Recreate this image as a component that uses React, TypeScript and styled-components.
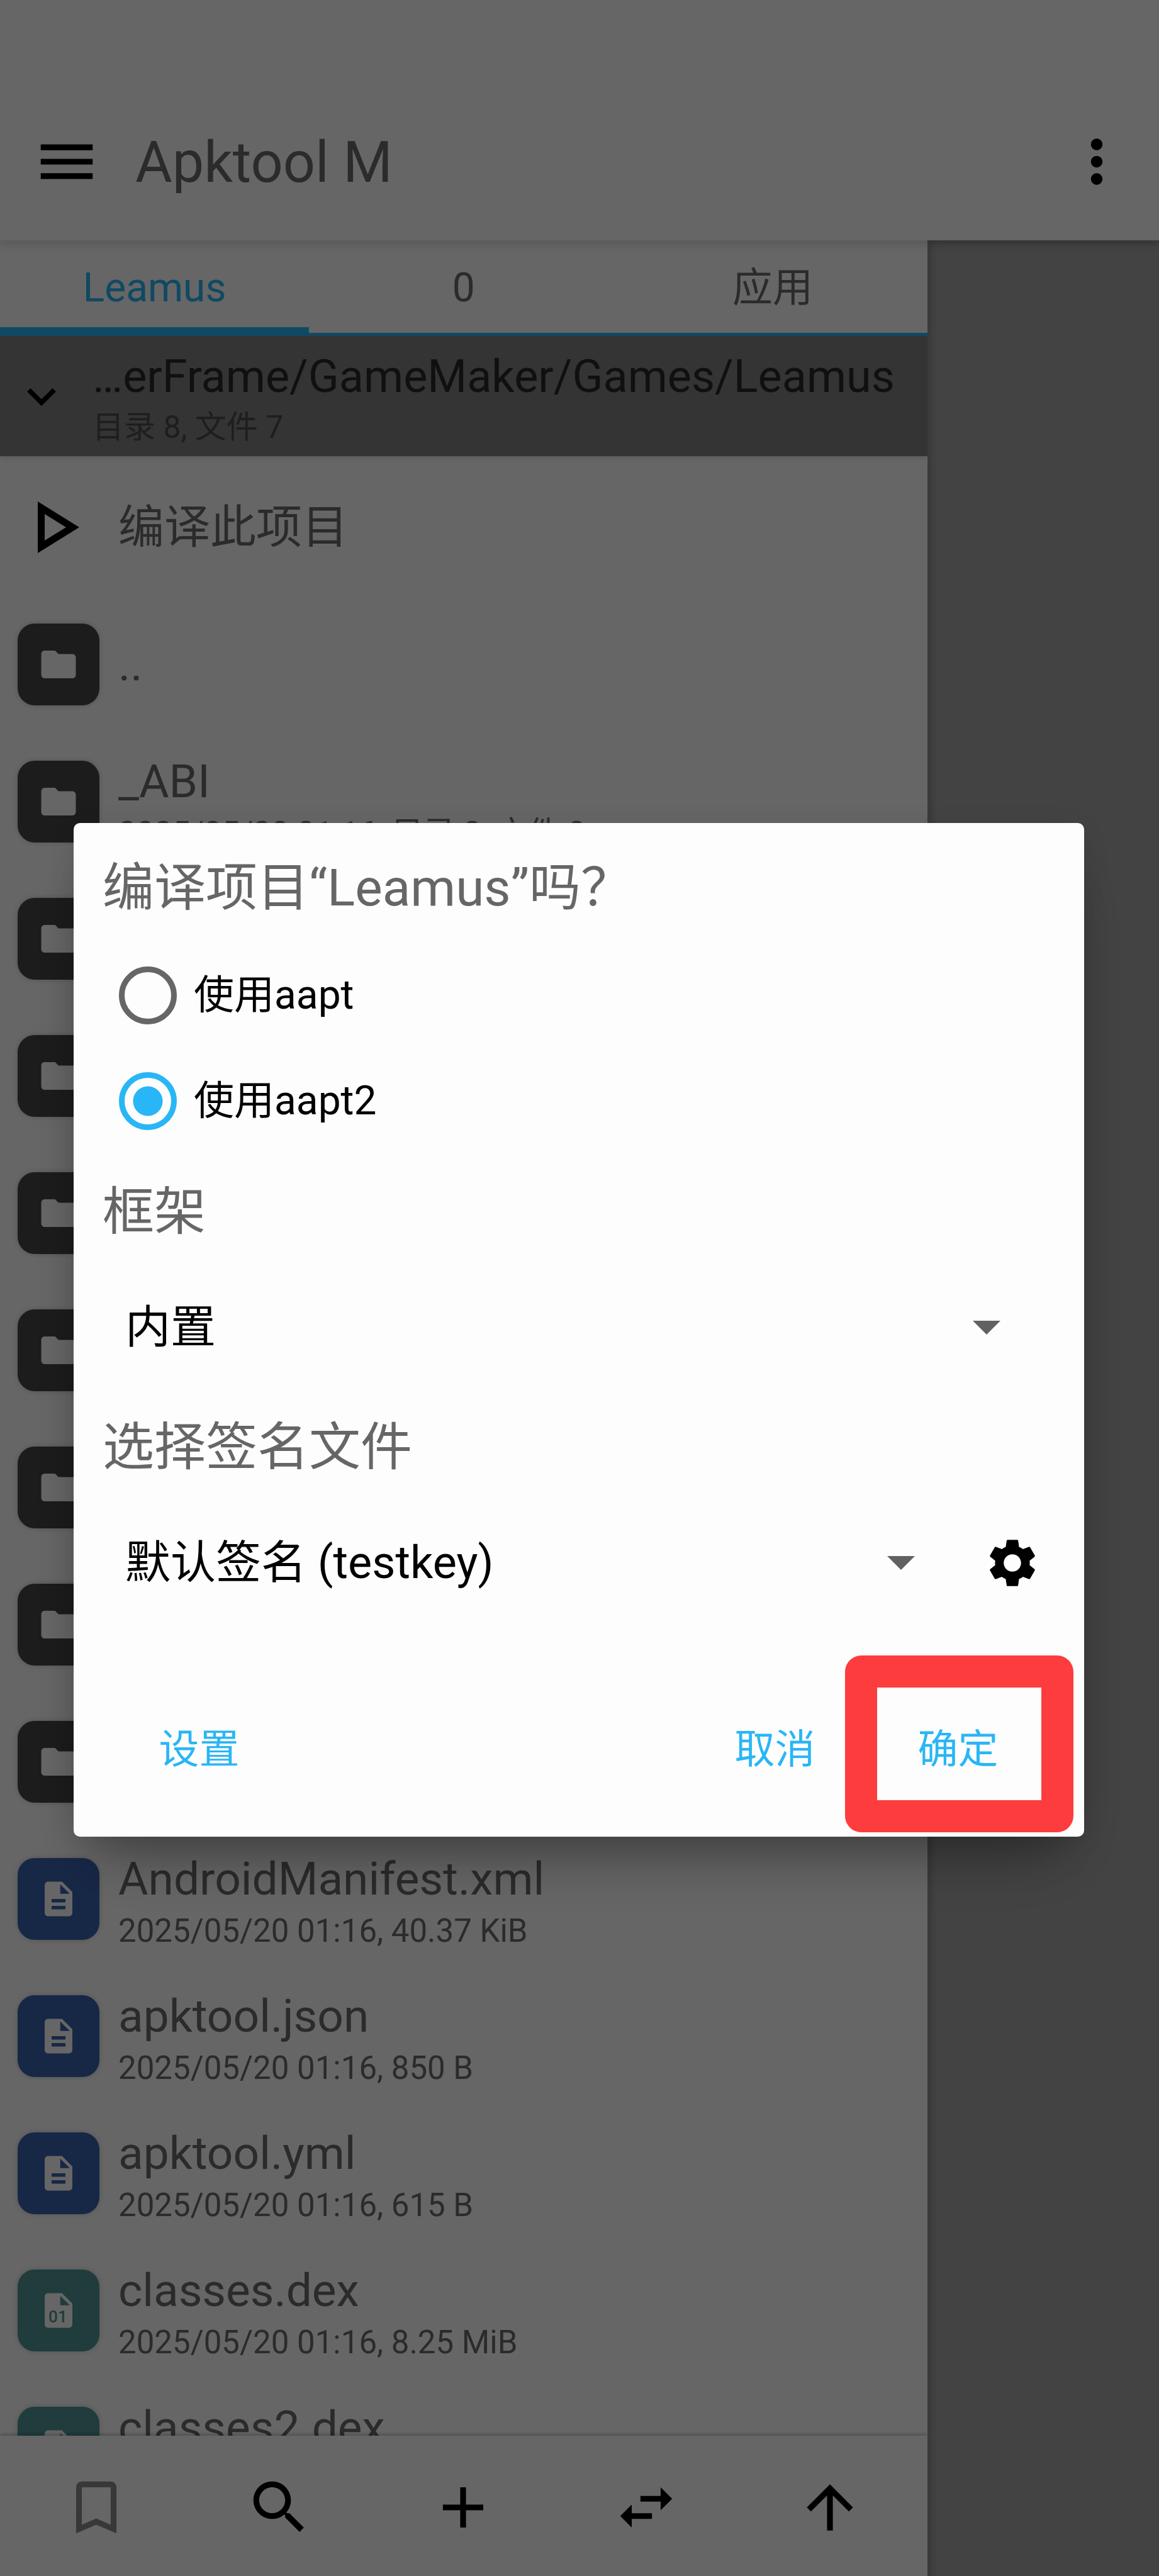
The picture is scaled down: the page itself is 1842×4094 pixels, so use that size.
import React, { useState } from 'react';
import styled, { createGlobalStyle } from 'styled-components';

const color = {
  surface: '#ffffff',
  dialog: '#fdfdfd',
  side: '#a8a8a8',
  path: '#828282',
  accent: '#29b6f6',
  text: '#6b6b6b',
  muted: '#666666',
  ink: '#000000',
  mark: '#fd3c3e',
};

const GlobalStyle = createGlobalStyle`
  *, *::before, *::after { box-sizing: border-box; }
  body { margin: 0; background: ${color.surface}; }
  body, button, input, select {
    font-family: Roboto, 'Noto Sans CJK SC', sans-serif;
  }
`;

const Screen = styled.div`
  display: flex;
  flex-direction: column;
  height: 100vh;
  overflow: hidden;
  background: ${color.surface};
`;

const AppBar = styled.header`
  display: flex;
  align-items: center;
  gap: 54px;
  flex: none;
  padding: 132px 44px 0 51px;
  height: 382px;
  background: ${color.surface};
  box-shadow: 0 8px 12px rgba(0, 0, 0, 0.12);
  z-index: 1;
`;

const AppTitle = styled.h1`
  flex: 1;
  margin: 0;
  padding-top: 4px;
  font-size: 90px;
  line-height: 108px;
  font-weight: 400;
  color: ${color.text};
`;

const IconButton = styled.button<{ $width?: number; $faded?: boolean }>`
  display: flex;
  align-items: center;
  justify-content: center;
  flex: none;
  width: ${(p) => (p.$width ? `${p.$width}px` : 'auto')};
  padding: 0;
  border: 0;
  background: none;
  color: ${(p) => (p.$faded ? '#8c8c8c' : color.ink)};
`;

const Body = styled.div`
  display: grid;
  grid-template-columns: 4fr 1fr;
  flex: 1;
  min-height: 0;
`;

const Pane = styled.main`
  display: flex;
  flex-direction: column;
  min-width: 0;
  min-height: 0;
`;

const SidePane = styled.aside`
  background: ${color.side};
  box-shadow: inset 12px 8px 10px -4px rgba(0, 0, 0, 0.14);
`;

const Tabs = styled.nav`
  display: grid;
  grid-template-columns: repeat(3, 1fr);
  flex: none;
  height: 152px;
  border-bottom: 5px solid ${color.accent};
`;

const Tab = styled.button<{ $active?: boolean }>`
  padding: 4px 0 0;
  border: 0;
  background: none;
  font-size: 64px;
  line-height: 76px;
  color: ${(p) => (p.$active ? color.accent : color.text)};
  box-shadow: ${(p) => (p.$active ? `inset 0 -9px ${color.accent}` : 'none')};
`;

const PathBar = styled.div`
  display: flex;
  align-items: center;
  gap: 26px;
  flex: none;
  height: 191px;
  padding-left: 11px;
  background: ${color.path};
  box-shadow: 0 4px 8px rgba(0, 0, 0, 0.1);
`;

const Lines = styled.div<{ $gap: number }>`
  display: flex;
  flex-direction: column;
  gap: ${(p) => p.$gap}px;
  min-width: 0;
  white-space: nowrap;
`;

const Name = styled.span`
  font-size: 73px;
  line-height: 86px;
  color: ${color.text};
`;

const Details = styled.span`
  min-height: 50px;
  font-size: 51px;
  line-height: 50px;
  color: ${color.text};
`;

const PathName = styled.span`
  font-size: 72px;
  line-height: 86px;
  color: #2a2a2a;
`;

const PathDetails = styled.span`
  font-size: 50px;
  line-height: 50px;
  color: #4b4b4b;
`;

const FileList = styled.ul`
  flex: 1;
  min-height: 0;
  margin: 0;
  padding: 4px 0 0;
  overflow: hidden;
  list-style: none;
`;

const FileRow = styled.li`
  display: flex;
  align-items: center;
  gap: 30px;
  height: 218px;
  padding-left: 28px;
`;

const Tile = styled.span<{ $fill: string }>`
  display: flex;
  align-items: center;
  justify-content: center;
  flex: none;
  width: 130px;
  height: 130px;
  border-radius: 27px;
  background: ${(p) => p.$fill};
  color: ${color.surface};
  box-shadow: 0 0 8px rgba(0, 0, 0, 0.2);
`;

const ActionTile = styled.span`
  display: flex;
  flex: none;
  color: ${color.ink};
`;

const BottomBar = styled.footer`
  display: grid;
  grid-template-columns: repeat(5, 1fr);
  flex: none;
  height: 223px;
  padding: 5px 9px 0 7px;
  background: ${color.surface};
  box-shadow: 0 -3px 5px rgba(0, 0, 0, 0.2);
`;

const Scrim = styled.div`
  position: fixed;
  inset: 0;
  z-index: 2;
  display: flex;
  align-items: center;
  padding: 132px 119px 0 117px;
  background: rgba(0, 0, 0, 0.6);
`;

const Dialog = styled.form`
  flex: 1;
  padding: 55px 46px 54px 0;
  border-radius: 10px;
  background: ${color.dialog};
  box-shadow: 0 60px 90px -30px rgba(0, 0, 0, 0.35), 0 10px 60px rgba(0, 0, 0, 0.12);
`;

const DialogTitle = styled.h2`
  margin: 0 0 39px;
  padding-left: 46px;
  font-size: 82px;
  line-height: 96px;
  font-weight: 400;
  color: ${color.muted};
`;

const RadioRow = styled.label`
  display: flex;
  align-items: center;
  gap: 27px;
  height: 168px;
  padding-left: 72px;
  font-size: 64px;
  line-height: 76px;
  color: ${color.ink};
`;

const Radio = styled.input`
  appearance: none;
  flex: none;
  width: 92px;
  height: 92px;
  margin: 0;
  border: 9px solid ${color.muted};
  border-radius: 50%;

  &:checked {
    border-color: ${color.accent};
    background: radial-gradient(circle, ${color.accent} 23px, transparent 24px);
  }
`;

const Fields = styled.div`
  padding-top: 38px;
`;

const Field = styled.div`
  display: flex;
  flex-direction: column;
  margin-top: 6px;
`;

const FieldLabel = styled.label`
  padding-left: 46px;
  font-size: 82px;
  line-height: 96px;
  color: ${color.muted};
`;

const FieldRow = styled.div`
  display: flex;
  height: 272px;
`;

const SelectBox = styled.div`
  display: grid;
  flex: 1;
  align-items: center;

  > * { grid-area: 1 / 1; }
`;

const Select = styled.select`
  appearance: none;
  width: 100%;
  height: 140px;
  padding: 0 160px 0 82px;
  border: 0;
  background: none;
  font-size: 72px;
  color: ${color.ink};
`;

const Caret = styled.span`
  justify-self: end;
  margin-right: 87px;
  border: 22px solid transparent;
  border-top-color: #616161;
  border-bottom-width: 0;
  pointer-events: none;
`;

const Actions = styled.div`
  display: flex;
  margin-top: 77px;
  padding: 0 9px 0 54px;
`;

const Spacer = styled.span`
  flex: 1;
`;

const Action = styled.button`
  position: relative;
  width: 291px;
  height: 168px;
  padding: 0;
  border: 0;
  background: none;
  font-size: 64px;
  line-height: 76px;
  color: ${color.accent};
`;

const Mark = styled.span`
  position: absolute;
  inset: -66px -38px -47px -34px;
  border: 51px solid ${color.mark};
  border-radius: 26px;
  pointer-events: none;
`;

const paths = {
  menu: 'M3 18h18v-2H3v2zm0-5h18v-2H3v2zm0-7v2h18V6H3z',
  more: 'M12 8c1.1 0 2-.9 2-2s-.9-2-2-2-2 .9-2 2 .9 2 2 2zm0 2c-1.1 0-2 .9-2 2s.9 2 2 2 2-.9 2-2-.9-2-2-2zm0 6c-1.1 0-2 .9-2 2s.9 2 2 2 2-.9 2-2-.9-2-2-2z',
  expand: 'M16.59 8.59L12 13.17 7.41 8.59 6 10l6 6 6-6z',
  folder: 'M10 4H4c-1.1 0-1.99.9-1.99 2L2 18c0 1.1.9 2 2 2h16c1.1 0 2-.9 2-2V8c0-1.1-.9-2-2-2h-8l-2-2z',
  document: 'M14 2H6c-1.1 0-1.99.9-1.99 2L4 20c0 1.1.89 2 1.99 2H18c1.1 0 2-.9 2-2V8l-6-6zm2 16H8v-2h8v2zm0-4H8v-2h8v2zm-3-5V3.5L18.5 9H13z',
  sheet: 'M14 2H6c-1.1 0-1.99.9-1.99 2L4 20c0 1.1.89 2 1.99 2H18c1.1 0 2-.9 2-2V8l-6-6zm-1 7V3.5L18.5 9H13z',
  bookmark: 'M17 3H7c-1.1 0-1.99.9-1.99 2L5 21l7-3 7 3V5c0-1.1-.9-2-2-2zm0 15l-5-2.18L7 18V5h10v13z',
  search: 'M15.5 14h-.79l-.28-.27C15.41 12.59 16 11.11 16 9.5 16 5.91 13.09 3 9.5 3S3 5.91 3 9.5 5.91 16 9.5 16c1.61 0 3.09-.59 4.23-1.57l.27.28v.79l5 4.99L20.49 19l-4.99-5zm-6 0C7.01 14 5 11.99 5 9.5S7.01 5 9.5 5 14 7.01 14 9.5 11.99 14 9.5 14z',
  add: 'M19 13h-6v6h-2v-6H5v-2h6V5h2v6h6v2z',
  swap: 'M6.99 11L3 15l3.99 4v-3H14v-2H6.99v-3zM21 9l-3.99-4v3H10v2h7.01v3L21 9z',
  up: 'M4 12l1.41 1.41L11 7.83V20h2V7.83l5.58 5.59L20 12l-8-8-8 8z',
  settings: 'M19.14 12.94c.04-.3.06-.61.06-.94 0-.32-.02-.64-.07-.94l2.03-1.58c.18-.14.23-.41.12-.61l-1.92-3.32c-.12-.22-.37-.29-.59-.22l-2.39.96c-.5-.38-1.03-.7-1.62-.94l-.36-2.54c-.04-.24-.24-.41-.48-.41h-3.84c-.24 0-.43.17-.47.41l-.36 2.54c-.59.24-1.13.57-1.62.94l-2.39-.96c-.22-.08-.47 0-.59.22L2.74 8.87c-.12.21-.08.47.12.61l2.03 1.58c-.05.3-.09.63-.09.94s.02.64.07.94l-2.03 1.58c-.18.14-.23.41-.12.61l1.92 3.32c.12.22.37.29.59.22l2.39-.96c.5.38 1.03.7 1.62.94l.36 2.54c.05.24.24.41.48.41h3.84c.24 0 .44-.17.47-.41l.36-2.54c.59-.24 1.13-.56 1.62-.94l2.39.96c.22.08.47 0 .59-.22l1.92-3.32c.12-.22.07-.47-.12-.61l-2.01-1.58zM12 15.6c-1.98 0-3.6-1.62-3.6-3.6s1.62-3.6 3.6-3.6 3.6 1.62 3.6 3.6-1.62 3.6-3.6 3.6z',
};

function Icon({ name, size }: { name: keyof typeof paths; size: number }) {
  return (
    <svg width={size} height={size} viewBox="0 0 24 24" fill="currentColor" aria-hidden="true">
      <path d={paths[name]} />
    </svg>
  );
}

function DexIcon() {
  return (
    <svg width="66" height="66" viewBox="0 0 24 24" aria-hidden="true">
      <path d={paths.sheet} fill="currentColor" />
      <text x="11.6" y="19" textAnchor="middle" fontSize="9.5" fontWeight="500" fontFamily="Roboto, sans-serif" fill="#529696">01</text>
    </svg>
  );
}

function PlayIcon() {
  return (
    <svg width="130" height="130" viewBox="0 0 130 130" fill="none" stroke="currentColor" strokeWidth="11" aria-hidden="true">
      <path d="M37.5 34V96L87.5 65Z" />
    </svg>
  );
}

type Kind = 'folder' | 'document' | 'dex';
type Entry = { kind: Kind; name?: string; details?: string };

const fills: Record<Kind, string> = { folder: '#464646', document: '#3a62b0', dex: '#529696' };

const entries: Entry[] = [
  { kind: 'folder', name: '..' },
  { kind: 'folder', name: '_ABI', details: '2025/05/20 01:16, 目录 2, 文件 0' },
  ...Array.from({ length: 7 }, (): Entry => ({ kind: 'folder' })),
  { kind: 'document', name: 'AndroidManifest.xml', details: '2025/05/20 01:16, 40.37 KiB' },
  { kind: 'document', name: 'apktool.json', details: '2025/05/20 01:16, 850 B' },
  { kind: 'document', name: 'apktool.yml', details: '2025/05/20 01:16, 615 B' },
  { kind: 'dex', name: 'classes.dex', details: '2025/05/20 01:16, 8.25 MiB' },
  { kind: 'dex', name: 'classes2.dex', details: '' },
];

function FileEntry({ kind, name, details }: Entry) {
  return (
    <FileRow>
      <Tile $fill={fills[kind]}>
        {kind === 'dex' ? <DexIcon /> : <Icon name={kind} size={66} />}
      </Tile>
      <Lines $gap={15}>
        {name && <Name>{name}</Name>}
        {details !== undefined && <Details>{details}</Details>}
      </Lines>
    </FileRow>
  );
}

function BuildDialog() {
  const [tool, setTool] = useState('aapt2');
  return (
    <Scrim>
      <Dialog role="dialog" aria-labelledby="build-title" onSubmit={(e) => e.preventDefault()}>
        <DialogTitle id="build-title">编译项目“Leamus”吗？</DialogTitle>
        {['aapt', 'aapt2'].map((value) => (
          <RadioRow key={value}>
            <Radio
              type="radio"
              name="tool"
              value={value}
              checked={tool === value}
              onChange={() => setTool(value)}
            />
            <span>使用{value}</span>
          </RadioRow>
        ))}
        <Fields>
          <Field>
            <FieldLabel htmlFor="framework">框架</FieldLabel>
            <FieldRow>
              <SelectBox>
                <Select id="framework"><option>内置</option></Select>
                <Caret />
              </SelectBox>
            </FieldRow>
          </Field>
          <Field>
            <FieldLabel htmlFor="signature">选择签名文件</FieldLabel>
            <FieldRow>
              <SelectBox>
                <Select id="signature"><option>默认签名 (testkey)</option></Select>
                <Caret />
              </SelectBox>
              <IconButton type="button" $width={136} aria-label="签名设置">
                <Icon name="settings" size={92} />
              </IconButton>
            </FieldRow>
          </Field>
        </Fields>
        <Actions>
          <Action type="button">设置</Action>
          <Spacer />
          <Action type="button">取消</Action>
          <Action type="submit">
            确定
            <Mark />
          </Action>
        </Actions>
      </Dialog>
    </Scrim>
  );
}

export default function App() {
  return (
    <>
      <GlobalStyle />
      <Screen>
        <AppBar>
          <IconButton aria-label="菜单"><Icon name="menu" size={110} /></IconButton>
          <AppTitle>Apktool M</AppTitle>
          <IconButton aria-label="更多"><Icon name="more" size={110} /></IconButton>
        </AppBar>
        <Body>
          <Pane>
            <Tabs>
              <Tab $active>Leamus</Tab>
              <Tab>0</Tab>
              <Tab>应用</Tab>
            </Tabs>
            <PathBar>
              <IconButton $width={110} aria-label="展开"><Icon name="expand" size={92} /></IconButton>
              <Lines $gap={12}>
                <PathName>…erFrame/GameMaker/Games/Leamus</PathName>
                <PathDetails>目录 8, 文件 7</PathDetails>
              </Lines>
            </PathBar>
            <FileList>
              <FileRow>
                <ActionTile><PlayIcon /></ActionTile>
                <Name>编译此项目</Name>
              </FileRow>
              {entries.map((entry, i) => <FileEntry key={i} {...entry} />)}
            </FileList>
            <BottomBar>
              <IconButton $faded aria-label="书签"><Icon name="bookmark" size={110} /></IconButton>
              <IconButton aria-label="搜索"><Icon name="search" size={110} /></IconButton>
              <IconButton aria-label="添加"><Icon name="add" size={110} /></IconButton>
              <IconButton aria-label="切换"><Icon name="swap" size={110} /></IconButton>
              <IconButton aria-label="向上"><Icon name="up" size={110} /></IconButton>
            </BottomBar>
          </Pane>
          <SidePane />
        </Body>
      </Screen>
      <BuildDialog />
    </>
  );
}
